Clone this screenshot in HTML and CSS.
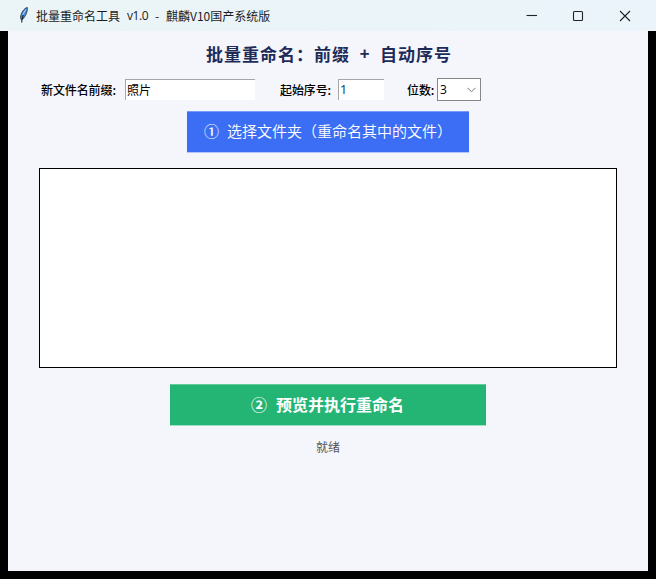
FILE: index.html
```html
<!DOCTYPE html>
<html lang="zh-CN">
<head>
<meta charset="utf-8">
<title>批量重命名工具</title>
<link rel="stylesheet" href="styles.css">
</head>
<body>
<header class="titlebar">
  <svg class="feather" width="10" height="18" viewBox="0 0 10 18">
    <path d="M8.300 1.500C5.400 2 2 6.500 1.500 11.500L2.500 14C5.500 12.300 8.800 6 8.300 1.500Z" fill="#4a90dc" stroke="#26364a" stroke-width=".9"/>
    <path d="M4.300 9C3.400 11 2.800 13 2.700 16.500" fill="none" stroke="#17202c" stroke-width="1.1"/>
    <path d="M6.800 3.500L3.600 9" stroke="#a5d0f5" stroke-width="1"/>
  </svg>
  <h1 class="caption"><span class="app">批量重命名工具</span><span class="version">v1.0</span><span class="dash">-</span><span class="edition">麒麟V10国产系统版</span></h1>
  <div class="controls">
    <svg width="10" height="10" viewBox="0 0 10 10"><path d="M.5 4.500H11"/></svg>
    <svg width="10" height="10" viewBox="0 0 10 10"><rect x=".5" y=".5" width="9" height="9" rx="1"/></svg>
    <svg width="10" height="10" viewBox="0 0 10 10"><path d="M0 0L10 10M10 0L0 10"/></svg>
  </div>
</header>
<main class="client">
  <h2 class="heading"><span>批量重命名：前缀</span><span class="plus">+</span><span>自动序号</span></h2>
  <div class="form">
    <label class="prefix-label">新文件名前缀:</label>
    <div class="entry prefix">照片</div>
    <label class="start-label">起始序号:</label>
    <div class="entry start">1</div>
    <label class="digits-label">位数:</label>
    <div class="combo"><span>3</span><svg width="9" height="6" viewBox="0 0 9 6"><path d="M.5 .8L4.500 4.800L8.500 .8"/></svg></div>
  </div>
  <div class="button choose"><span class="num">①</span><span>选择文件夹（重命名其中的文件）</span></div>
  <div class="list"></div>
  <div class="button run"><span class="num">②</span><span>预览并执行重命名</span></div>
  <p class="status">就绪</p>
</main>
</body>
</html>
```
FILE: styles.css
```css
* { box-sizing: border-box; }
body {
  margin: 0;
  width: 656px;
  height: 579px;
  overflow: hidden;
  background: #000;
  color: #1c1c1c;
  font: 12px/16px "Noto Sans CJK SC", sans-serif;
}
h1, h2, p { margin: 0; font-weight: 400; }
.titlebar {
  display: flex;
  align-items: center;
  height: 31px;
  padding: 0 26px 0 19px;
  background: linear-gradient(90deg, #ebf5f7, #eaf4fa);
}
.feather { margin-top: -1px; }
.caption {
  display: flex;
  margin-left: 7px;
  font-size: 12px;
  line-height: 16px;
  white-space: nowrap;
}
.app { width: 91px; }
.version { width: 28px; font-family: "Open Sans", sans-serif; letter-spacing: -.4px; }
.dash { width: 11px; }
.controls { display: flex; gap: 37px; margin-left: auto; }
.controls svg { fill: none; stroke: #222; stroke-width: 1.1; overflow: visible; }
.client {
  display: flex;
  flex-direction: column;
  align-items: center;
  width: 640px;
  height: 540px;
  margin: 0 auto;
  background: #f4f6fc;
}
.heading {
  display: flex;
  margin-top: 11px;
  margin-left: 2px;
  height: 24px;
  color: #1e2b58;
  font-size: 17px;
  font-weight: 700;
  line-height: 24px;
  letter-spacing: 1px;
  white-space: nowrap;
}
.plus {
  width: 30px;
  text-align: center;
  font-family: "Liberation Mono", monospace;
  line-height: 26px;
}
.form {
  display: flex;
  align-items: center;
  align-self: stretch;
  height: 24px;
  margin-top: 11px;
  padding-left: 33px;
  color: #000;
  white-space: nowrap;
}
.form label { padding-top: 2px; font-weight: 500; letter-spacing: -.1px; }
.prefix-label { width: 84px; }
.start-label { width: 58px; margin-left: 25px; }
.digits-label { width: 30px; margin-left: 23px; }
.entry {
  height: 21px;
  border-top: 1px solid #a6a6a6;
  border-left: 1px solid #a6a6a6;
  background: #fff;
  line-height: 20px;
  padding-left: 1px;
}
.prefix { width: 130px; }
.start { width: 46px; padding-left: 1px; color: #143f70; font-family: "Noto Sans", sans-serif; font-size: 12.500px; }
.combo {
  display: flex;
  align-items: center;
  justify-content: space-between;
  width: 44px;
  height: 23px;
  padding: 1px 4px 0 2px;
  border: 1px solid #868686;
  background: #fff;
  font-family: "Open Sans", sans-serif;
}
.combo svg { fill: none; stroke: #777; }
.button {
  display: flex;
  align-items: center;
  height: 42px;
  padding-bottom: 2px;
  color: #fff;
  white-space: nowrap;
}
.choose {
  width: 282px;
  margin-top: 10px;
  padding-left: 17px;
  border-top: 1px solid #7899f7;
  border-bottom: 1px solid #b4c6fa;
  background: #3b6ef5;
  font-size: 15px;
  font-weight: 350;
}
.choose .num { width: 23px; font-weight: 500; }
.list {
  width: 578px;
  height: 200px;
  margin-top: 15px;
  border: 1px solid #000;
  background: #fff;
}
.run {
  width: 316px;
  margin-top: 16px;
  padding-left: 81px;
  border-top: 1px solid #62cb9b;
  border-bottom: 1px solid #9ee0c4;
  background: #24b574;
  font-size: 16px;
  font-weight: 700;
}
.run .num { width: 25px; }
.status { margin-top: 13px; color: #555; }
```
